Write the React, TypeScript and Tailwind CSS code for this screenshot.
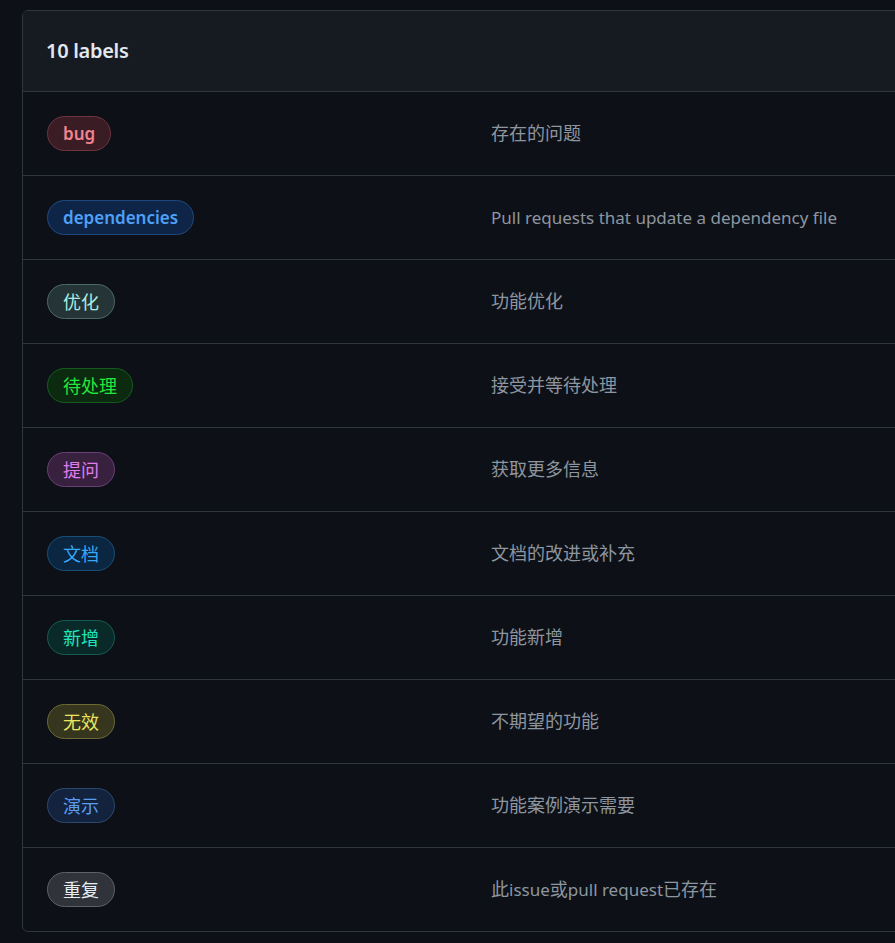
import React from "react";

type Label = { name: string; desc: string; text: string; bg: string; border: string; latin?: boolean };

const labels: Label[] = [
  { name: "bug", desc: "存在的问题", text: "text-[#f2838f]", bg: "bg-[#3a1c24]", border: "border-[#6e3440]", latin: true },
  { name: "dependencies", desc: "Pull requests that update a dependency file", text: "text-[#4fa0f7]", bg: "bg-[#0e2547]", border: "border-[#1e4a80]", latin: true },
  { name: "优化", desc: "功能优化", text: "text-[#a8ece2]", bg: "bg-[#253537]", border: "border-[#4c6a69]" },
  { name: "待处理", desc: "接受并等待处理", text: "text-[#22e83c]", bg: "bg-[#0b2a10]", border: "border-[#155d1d]" },
  { name: "提问", desc: "获取更多信息", text: "text-[#e07cf0]", bg: "bg-[#38213f]", border: "border-[#6b3f78]" },
  { name: "文档", desc: "文档的改进或补充", text: "text-[#3aa8f6]", bg: "bg-[#0b2640]", border: "border-[#1a4f77]" },
  { name: "新增", desc: "功能新增", text: "text-[#1fe5bd]", bg: "bg-[#0a2a29]", border: "border-[#165b53]" },
  { name: "无效", desc: "不期望的功能", text: "text-[#ece55e]", bg: "bg-[#36361f]", border: "border-[#6c6a35]" },
  { name: "演示", desc: "功能案例演示需要", text: "text-[#5c9cf0]", bg: "bg-[#13233d]", border: "border-[#2b4870]" },
  { name: "重复", desc: "此issue或pull request已存在", text: "text-[#e6edf3]", bg: "bg-[#30343a]", border: "border-[#5d6268]" },
];

function Mixed({ text }: { text: string }) {
  const parts = text.split(/([\u4e00-\u9fff]+)/).filter((p) => p.length > 0);
  return (
    <>
      {parts.map((p, i) =>
        /[\u4e00-\u9fff]/.test(p) ? (
          <span key={i} className="text-[18px]">
            {p}
          </span>
        ) : (
          <span key={i}>{p}</span>
        )
      )}
    </>
  );
}

export default function App() {
  return (
    <div
      className="min-h-[943px] w-[895px] overflow-hidden bg-[#0d1117] pl-[22px] pt-[10px]"
      style={{ fontFamily: '"Noto Sans", "Noto Sans CJK SC", sans-serif' }}
    >
      <div className="w-[900px] overflow-hidden rounded-[6px] border border-[#30363d]">
        <div className="flex h-[80px] items-center bg-[#161b22] pl-[23px]">
          <h2 className="text-[20px] font-semibold tracking-[-0.3px] text-[#e1e8ef]">10 labels</h2>
        </div>
        {labels.map((l) => (
          <div key={l.name} className="flex h-[84px] items-center border-t border-[#30363d] pl-[24px]">
            <div className="w-[444px] shrink-0">
              <span
                className={`inline-flex h-[35px] items-center rounded-full border px-[15px] leading-none ${l.text} ${l.bg} ${l.border} ${l.latin ? "text-[17px] font-semibold" : "text-[18px] font-normal"}`}
              >
                {l.name}
              </span>
            </div>
            <div className="text-[17px] text-[#8d96a0]">
              <Mixed text={l.desc} />
            </div>
          </div>
        ))}
      </div>
    </div>
  );
}
